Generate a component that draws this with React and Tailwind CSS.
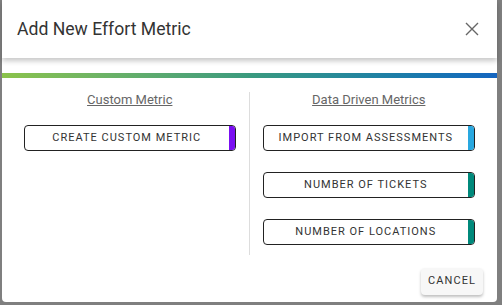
import React from 'react';

const metrics = [
  { label: 'IMPORT FROM ASSESSMENTS', stripe: 'bg-[#29a8e0]' },
  { label: 'NUMBER OF TICKETS', stripe: 'bg-[#00897b]' },
  { label: 'NUMBER OF LOCATIONS', stripe: 'bg-[#00897b]' },
];

const MetricButton = ({ label, stripe }) => (
  <button className="flex w-full h-[26px] items-stretch rounded-[4px] border border-[#222] bg-white overflow-hidden">
    <span className="flex flex-1 items-center justify-center text-[11px] tracking-[1px] text-[#333]">
      {label}
    </span>
    <span className={`w-[6px] ${stripe}`} />
  </button>
);

const App = () => {
  return (
    <div
      className="w-[502px] h-[305px] bg-[#7f7f7f] pl-[2px] overflow-hidden"
      style={{ fontFamily: 'Roboto, "Liberation Sans", sans-serif' }}
    >
      <div className="w-[495px] h-[302px] bg-white rounded-b-[4px] flex flex-col">
        {/* Header */}
        <div className="relative z-10 flex h-[58px] items-center justify-between bg-white pl-[15px] pr-[18px] shadow-[0_3px_5px_rgba(0,0,0,0.22)]">
          <h2 className="text-[17.6px] text-[#333]">Add New Effort Metric</h2>
          <svg width="14" height="14" viewBox="0 0 14 14" className="text-[#666]">
            <path d="M1 1L13 13M13 1L1 13" stroke="currentColor" strokeWidth="1.4" />
          </svg>
        </div>

        {/* Gradient bar */}
        <div className="mt-[15px] h-[5px] bg-gradient-to-r from-[#8bc34a] via-[#3a9a7e] to-[#1565c0]" />

        {/* Body */}
        <div className="flex px-[22px] pt-[14px]">
          <div className="w-[212px] flex flex-col items-center">
            <h3 className="h-[16px] leading-[16px] text-[13px] text-[#666] underline">Custom Metric</h3>
            <div className="mt-[17px] w-full">
              <MetricButton label="CREATE CUSTOM METRIC" stripe="bg-[#7a0ff2]" />
            </div>
          </div>

          <div className="mx-[13px] w-px bg-[#ddd] h-[163px]" />

          <div className="w-[213px] flex flex-col items-center">
            <h3 className="h-[16px] leading-[16px] text-[13px] text-[#666] underline">Data Driven Metrics</h3>
            <div className="mt-[17px] w-full flex flex-col gap-[21px]">
              {metrics.map((m) => (
                <MetricButton key={m.label} {...m} />
              ))}
            </div>
          </div>
        </div>

        {/* Footer */}
        <div className="flex justify-end pr-[14px] mt-[13px]">
          <button className="h-[27px] w-[62px] rounded-[4px] bg-[#f7f7f7] text-[11px] tracking-[1.1px] text-[#333] shadow-[0_2px_3px_rgba(0,0,0,0.25)]">
            CANCEL
          </button>
        </div>
      </div>
    </div>
  );
};

export default App;
